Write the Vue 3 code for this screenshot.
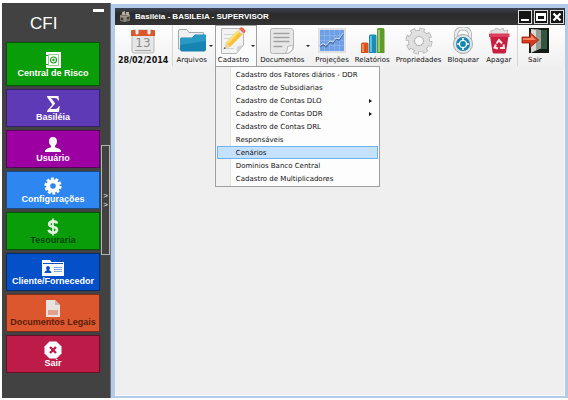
<template>
  <div class="desktop">
    <aside class="sidebar">
      <button class="minimize" type="button" aria-label="Minimizar"></button>
      <h1 class="brand">CFI</h1>
      <div class="sidebar-body">
        <nav class="tiles">
          <button
            v-for="tile in tiles"
            :key="tile.id"
            type="button"
            class="tile"
            :class="`tile-${tile.id}`"
          >
            <svg v-if="tile.id === 'risco'" class="tile-icon" viewBox="0 0 18 18">
              <path fill="#fff" d="M2 1h15v16H2z" />
              <path fill="none" stroke="#8fce8f" d="M4.500 3.500h10v11h-10z" />
              <circle cx="9.500" cy="9" r="3" fill="#fff" stroke="#1c9a1c" stroke-width="1.200" />
              <circle cx="9.500" cy="9" r="1.200" fill="#1c9a1c" />
              <path fill="#1c9a1c" d="M2 4h2v1H2zM2 13h2v1H2z" />
            </svg>
            <svg v-else-if="tile.id === 'basileia'" class="tile-icon" viewBox="0 0 18 18">
              <path fill="#fff" d="M3 1h11.500l.5 4.500h-1C13.400 3.700 12.500 3 10.500 3H7l4.200 5.500L6.300 14h4.900c2 0 2.900-.8 3.600-2.700h1L14.800 17H3v-1l5.400-6.400L3 2z" />
            </svg>
            <svg v-else-if="tile.id === 'usuario'" class="tile-icon" viewBox="0 0 18 18">
              <path fill="#fff" d="M9 1c2.600 0 4 1.800 4 4.200 0 2-.9 3.700-2 4.500v1.500c2.400.8 6 1.800 6 3.800v1H1v-1c0-2 3.600-3 6-3.800V9.700c-1.100-.8-2-2.500-2-4.500C5 2.800 6.400 1 9 1z" />
            </svg>
            <svg v-else-if="tile.id === 'config'" class="tile-icon" viewBox="0 0 18 18">
              <circle cx="9" cy="9" r="7.400" fill="none" stroke="#fff" stroke-width="2.400" stroke-dasharray="2.900 1.750" />
              <circle cx="9" cy="9" r="4.800" fill="none" stroke="#fff" stroke-width="4" />
            </svg>
            <svg v-else-if="tile.id === 'tesouraria'" class="tile-icon" viewBox="0 0 18 18">
              <path fill="none" stroke="#e2f2df" stroke-width="2.600" d="M13 5.500C12.600 4 11 3.400 9 3.400S5.200 4.400 5.200 6.200C5.200 10 13 7.600 13 11.800c0 1.900-1.800 2.900-4 2.900s-4-1-4.300-2.900" />
              <path fill="none" stroke="#e2f2df" stroke-width="1.800" d="M9 .5v17" />
            </svg>
            <svg v-else-if="tile.id === 'cliente'" class="tile-icon wide" viewBox="0 0 22 18">
              <path fill="#fff" d="M0 1h8l1.500 2H22v14H0z" />
              <path fill="#0a50c8" d="M1 4h20v1H1zM6 7c1.200 0 1.900.8 1.900 2S7.300 11 6.900 11.300c1 .4 2.600.8 2.600 2.700h-7c0-1.900 1.600-2.300 2.600-2.700C4.700 11 4.100 10.200 4.100 9S4.800 7 6 7z" />
              <path stroke="#7fa6e4" d="M12 8.500h8M12 10.500h8M12 12.500h8" />
            </svg>
            <svg v-else-if="tile.id === 'documentos'" class="tile-icon" viewBox="0 0 18 18">
              <path fill="#e9e3e0" d="M2 0h9l5 5v12H2z" />
              <path fill="#c9b6ae" d="M11 0l5 5h-5z" />
              <path fill="#e0a28e" d="M4 10h10v5H4z" />
            </svg>
            <svg v-else class="tile-icon" viewBox="0 0 18 18">
              <path fill="#fff" d="M5.500.5h7l5 5v7l-5 5h-7l-5-5v-7z" />
              <path stroke="#bd1c48" stroke-width="2.400" d="M6 6l6 6M12 6l-6 6" />
            </svg>
            <span>{{ tile.label }}</span>
          </button>
        </nav>
        <button class="handle" type="button" aria-label="Expandir">
          <span>&gt;</span>
          <span>&gt;</span>
        </button>
      </div>
    </aside>

    <main class="window">
      <header class="titlebar">
        <svg class="app-icon" viewBox="0 0 12 12">
          <path fill="#77726a" d="M1 4l7-2 3 2v6l-6 1-4-1z" />
          <path fill="#b5ada0" d="M3 1l3-1v4H3zM7 1h3v3H7z" />
          <path stroke="#a8a296" fill="none" d="M1 5l5 1 5-2M6 6v5" />
          <path fill="#3d3b38" d="M2 7h2v2H2zM8 6h2v2H8z" />
        </svg>
        <h2 class="title">Basiléia - BASILEIA - SUPERVISOR</h2>
        <div class="controls">
          <button type="button" aria-label="Minimizar janela">
            <svg viewBox="0 0 12 12"><path fill="#fff" d="M2 8h8v2H2z" /></svg>
          </button>
          <button type="button" aria-label="Maximizar janela">
            <svg viewBox="0 0 12 12"><path fill="#fff" fill-rule="evenodd" d="M1 2h10v8H1zM3 5v3h6V5z" /></svg>
          </button>
          <button type="button" aria-label="Fechar janela">
            <svg viewBox="0 0 12 12"><path stroke="#fff" stroke-width="2.400" d="M2.500 2.500l7 7M9.500 2.500l-7 7" /></svg>
          </button>
        </div>
      </header>

      <div class="toolbar">
        <div
          v-for="item in tools"
          :key="item.id"
          class="tool-wrap"
          :class="{ separated: item.separated }"
        >
          <button
            type="button"
            class="tool"
            :class="{ open: openMenu === item.id, date: item.id === 'data', dropdown: item.dropdown }"
            @click="toggle(item)"
          >
            <span class="tool-face">
              <svg v-if="item.id === 'data'" class="tool-icon" viewBox="0 0 28 28">
                <rect x="3" y="3" width="22" height="23" rx="2" fill="#e6e6e6" stroke="#b9b9b9" />
                <path fill="#d9572b" d="M3 3h22a1 1 0 0 1 1 1v5H2V4a1 1 0 0 1 1-1z" />
                <path stroke="#f3f3f3" stroke-width="3" stroke-linecap="round" d="M8 2v4M20 2v4" />
                <path stroke="#a5a5a5" d="M6 23.500h16" />
                <text x="14" y="20" text-anchor="middle" class="day">13</text>
              </svg>
              <svg v-else-if="item.id === 'arquivos'" class="tool-icon" viewBox="0 0 28 28">
                <path fill="#eef0f1" stroke="#a4a9ab" d="M.5 22V4q0-1.500 1.500-1.500h7l2 3h14.500V22z" />
                <path fill="#1784b2" d="M2 12q0-1.500 1.500-1.500H14l3-3h10q1 0 1 1V22.500q0 2-2 2H4q-2 0-2-2z" />
                <path fill="#37a6cf" d="M2 12.500q0-1.500 1.500-1.500h11l3-3H28V14L2 18z" opacity=".6" />
              </svg>
              <svg v-else-if="item.id === 'cadastro'" class="tool-icon" viewBox="0 0 28 28">
                <path fill="#f2f3f3" stroke="#b4b6b6" d="M2.500 1.500h22V18l-7 8.500h-15z" />
                <path fill="#cfd3d4" d="M24.500 18l-7 8.500.5-7z" />
                <path stroke="#d0d3d4" d="M5 7.500h10M5 11.500h7M5 21.500h10" />
                <path fill="#f6c338" d="M19 3l5 4L11 20l-5 1 1-5.500z" />
                <path fill="#fbe07c" d="M19 3l2 1.500L9 17l-2-1.500z" />
                <path fill="#dfe2e2" d="M18.500 3.500L20 2l5 4.500L23.500 8z" />
                <path fill="#ee6a4d" d="M20 2l1.500-1.500q1-.5 2 0L26 3q1 1 0 2.200L25 6.500z" />
                <path fill="#efd5ac" d="M7 15.500l4 4.500-6 1.800z" />
                <path fill="#555" d="M5.500 20l1.500 1.300-2.500 1z" />
              </svg>
              <svg v-else-if="item.id === 'documentos'" class="tool-icon" viewBox="0 0 28 28">
                <path fill="#e7e7e7" stroke="#b5b5b5" d="M4.500 1.500h18q3 0 3 3V20q-1 6-8 6.500h-13q-2 0-2-2v-21q0-2 2-2z" />
                <path fill="#fafafa" stroke="#b5b5b5" d="M25.500 19q-2-1-6 .5.500 4-2.500 7 7 0 8.500-7.500z" />
                <path stroke="#a2a2a2" stroke-width="1.300" stroke-linecap="round" d="M6 6.500h15M6 10.500h15M6 14.500h15M6 19.500h8" />
              </svg>
              <svg v-else-if="item.id === 'projecoes'" class="tool-icon" viewBox="0 0 28 28">
                <path fill="#dfe1e4" d="M0 1h28v25H0z" />
                <path fill="#6fa0e6" d="M2 3h24v21H2z" />
                <path stroke="#93baf0" stroke-width=".6" d="M6.500 3v21M11.500 3v21M16.500 3v21M21.500 3v21M2 8.500h24M2 13.500h24M2 18.500h24" />
                <path fill="none" stroke="#466ba8" stroke-width="1.800" d="M2 19.500l3-2 3 2 4-4.500 3 1 3-4 3 1 4-6" />
                <path fill="none" stroke="#e7effa" stroke-width=".9" d="M2 18.500l3-2 3 2 4-4.500 3 1 3-4 3 1 4-6" />
              </svg>
              <svg v-else-if="item.id === 'relatorios'" class="tool-icon" viewBox="0 0 28 28">
                <path fill="#d9531e" d="M3 17q0-1.500 1.500-1.500H9q1.500 0 1.500 1.500v9H3z" />
                <path fill="#f08a50" d="M4 17h2v8H4z" />
                <path fill="#1c8dba" d="M11 9q0-1.500 1.500-1.500H17q1.500 0 1.500 1.500v17H11z" />
                <path fill="#5cc0e0" d="M12 9h2v16h-2z" />
                <path fill="#5f9a2d" d="M19 3q0-2 1.500-2H25q1.500 0 1.500 2v23H19z" />
                <path fill="#9ccb63" d="M20 3h2v22h-2z" />
              </svg>
              <svg v-else-if="item.id === 'propriedades'" class="tool-icon" viewBox="0 0 28 28">
                <circle cx="14" cy="14" r="11" fill="none" stroke="#b4b4b4" stroke-width="5" stroke-dasharray="5 3.640" />
                <circle cx="14" cy="14" r="8" fill="none" stroke="#b4b4b4" stroke-width="6" />
                <circle cx="14" cy="14" r="10.500" fill="none" stroke="#e0e0e0" stroke-width="4.500" stroke-dasharray="3.400 4.847" stroke-dashoffset="-.7" />
                <circle cx="14" cy="14" r="7.800" fill="none" stroke="#e0e0e0" stroke-width="5" />
                <circle cx="14" cy="14" r="4.500" fill="#f6f6f6" stroke="#b4b4b4" />
              </svg>
              <svg v-else-if="item.id === 'bloquear'" class="tool-icon" viewBox="0 0 28 28">
                <path fill="none" stroke="#a9adaf" stroke-width="4" d="M7 14V8q0-6.500 7-6.500T21 8v6" />
                <path fill="none" stroke="#eceeee" stroke-width="2.400" d="M7 14V8q0-6.500 7-6.500T21 8v6" />
                <circle cx="14" cy="17" r="9.500" fill="#e3e6e7" stroke="#a5aaac" />
                <circle cx="14" cy="17" r="7" fill="#1786ae" />
                <circle cx="14" cy="17" r="3.500" fill="none" stroke="#fff" stroke-width="1.200" />
                <path fill="#fff" d="M13.200 11h1.600v3h-1.600zM13.200 20h1.600v3h-1.600zM8 16.200h3v1.600H8zM17 16.200h3v1.600h-3z" />
              </svg>
              <svg v-else-if="item.id === 'apagar'" class="tool-icon" viewBox="0 0 28 28">
                <path fill="#e1e1e1" stroke="#aaa" stroke-width=".7" d="M7 8L5.500 4l4-1 1.500-2 4 2 3-2 1 3 4-1-1.500 5z" />
                <path fill="#c71f41" d="M5 9h18.500L21 25q-.2 1.500-2 1.500H9.500q-1.800 0-2-1.500z" />
                <path fill="#dc3f5b" d="M4 6.500h20.500V10H4z" />
                <path fill="none" stroke="#fbe9ec" stroke-width="2" d="M11.500 16.500L14 13l3 3.500M18.500 17.500L19 21h-4M13 21.500l-3.500-1 1.500-3" />
              </svg>
              <svg v-else class="tool-icon" viewBox="0 0 28 28">
                <path fill="#171b18" d="M8 1h20v25H8z" />
                <path fill="#31553d" d="M19 3h7v19h-7z" />
                <path fill="#d8d9d4" d="M10 2l10 1v18L10 26z" />
                <path fill="#9a9d97" d="M15 2.500l5 .5v18l-5 2.500z" />
                <path fill="#d6391d" stroke="#8e1c0c" stroke-width=".8" d="M1 10h8V5.500L17.500 13 9 20.500V16H1z" />
                <path fill="#f58563" d="M2 11h8V8l5 5H2z" />
              </svg>
              <span class="tool-label">{{ item.label }}</span>
            </span>
            <span v-if="item.dropdown" class="caret"></span>
          </button>

          <ul v-if="item.id === 'cadastro' && openMenu === 'cadastro'" class="menu">
            <li v-for="entry in menuItems" :key="entry.label">
              <button
                type="button"
                class="menu-item"
                :class="{ active: entry.label === activeEntry }"
                @mouseenter="activeEntry = entry.label"
              >
                <span>{{ entry.label }}</span>
                <span v-if="entry.submenu" class="submenu-arrow"></span>
              </button>
            </li>
          </ul>
        </div>
      </div>

      <section class="workspace"></section>
    </main>
  </div>
</template>

<script setup>
import { ref } from 'vue';

const tiles = [
  { id: 'risco', label: 'Central de Risco' },
  { id: 'basileia', label: 'Basiléia' },
  { id: 'usuario', label: 'Usuário' },
  { id: 'config', label: 'Configurações' },
  { id: 'tesouraria', label: 'Tesouraria' },
  { id: 'cliente', label: 'Cliente/Fornecedor' },
  { id: 'documentos', label: 'Documentos Legais' },
  { id: 'sair', label: 'Sair' }
];

const tools = [
  { id: 'data', label: '28/02/2014' },
  { id: 'arquivos', label: 'Arquivos', dropdown: true, separated: true },
  { id: 'cadastro', label: 'Cadastro', dropdown: true },
  { id: 'documentos', label: 'Documentos', dropdown: true },
  { id: 'projecoes', label: 'Projeções' },
  { id: 'relatorios', label: 'Relatórios' },
  { id: 'propriedades', label: 'Propriedades' },
  { id: 'bloquear', label: 'Bloquear' },
  { id: 'apagar', label: 'Apagar' },
  { id: 'sair', label: 'Sair', separated: true }
];

const menuItems = [
  { label: 'Cadastro dos Fatores diários - DDR' },
  { label: 'Cadastro de Subsidiarias' },
  { label: 'Cadastro de Contas DLO', submenu: true },
  { label: 'Cadastro de Contas DDR', submenu: true },
  { label: 'Cadastro de Contas DRL' },
  { label: 'Responsáveis' },
  { label: 'Cenários' },
  { label: 'Domínios Banco Central' },
  { label: 'Cadastro de Multiplicadores' }
];

const openMenu = ref('cadastro');
const activeEntry = ref('Cenários');

function toggle(item) {
  if (!item.dropdown) return;
  openMenu.value = openMenu.value === item.id ? null : item.id;
}
</script>

<style>
body {
  margin: 0;
  background: #fff;
}
</style>

<style scoped>
.desktop {
  display: flex;
  box-sizing: border-box;
  min-height: 100vh;
  padding: 3px 0 2px 2px;
  font-family: "DejaVu Sans", sans-serif;
  font-size: 7px;
  color: #111;
}

button {
  margin: 0;
  padding: 0;
  border: 0;
  background: none;
  font: inherit;
  color: inherit;
}

/* Barra lateral */
.sidebar {
  display: flex;
  flex-direction: column;
  box-sizing: border-box;
  width: 109px;
  flex-shrink: 0;
  padding-left: 4px;
  background: #424242;
  border-right: 1px solid #6d7480;
  font-family: "Liberation Sans", Arial, sans-serif;
}

.minimize {
  align-self: flex-end;
  width: 11px;
  height: 3px;
  margin: 6px 6px 0 0;
  background: #fff;
}

.brand {
  margin: 2px 0 8px 24px;
  font-size: 17px;
  line-height: 20px;
  font-weight: 400;
  color: #fff;
}

.sidebar-body {
  display: flex;
  gap: 1px;
}

.tiles {
  display: flex;
  flex: 1;
  flex-direction: column;
  gap: 3px;
}

.tile {
  display: flex;
  flex-direction: column;
  align-items: center;
  justify-content: center;
  box-sizing: border-box;
  height: 38px;
  border: 1px solid rgba(0, 0, 0, 0.45);
  font-size: 9px;
  line-height: 9px;
  font-weight: 700;
  white-space: nowrap;
  color: #fff;
}

.tile-icon {
  width: 18px;
  height: 18px;
}

.tile-icon.wide {
  width: 22px;
}

.tile-risco {
  height: 44px;
  background: #099d09;
}

.tile-basileia {
  background: #5f3ab6;
}

.tile-usuario {
  background: #9c00a3;
}

.tile-config {
  background: #2e87f0;
}

.tile-tesouraria {
  background: #099d09;
  color: #07450a;
}

.tile-cliente {
  background: #0350c8;
}

.tile-documentos {
  background: #dc572e;
  color: #5c1d0b;
}

.tile-sair {
  background: #bd1c48;
}

.handle {
  display: flex;
  flex-direction: column;
  align-items: center;
  justify-content: center;
  box-sizing: border-box;
  width: 9px;
  height: 110px;
  margin-top: 103px;
  border: 1px solid #b4b4b4;
  font-size: 8px;
  line-height: 9px;
  color: #fff;
}

/* Janela principal */
.window {
  display: flex;
  flex: 1;
  flex-direction: column;
  min-width: 0;
  margin-top: 1px;
  border: solid #b2cbe8;
  border-width: 4px 3px 2px 4px;
  background: #efefef;
}

.titlebar {
  display: flex;
  align-items: center;
  height: 17px;
  padding: 0 1px 0 4px;
  background: linear-gradient(#3c4350, #2b2b2b 35%, #343434);
  color: #fff;
}

.app-icon {
  width: 12px;
  height: 12px;
}

.title {
  flex: 1;
  margin: 0 0 0 4px;
  font-family: "Liberation Sans", Arial, sans-serif;
  font-size: 8px;
  font-weight: 700;
}

.controls {
  display: flex;
  gap: 2px;
}

.controls button {
  display: flex;
  box-sizing: border-box;
  width: 14px;
  height: 14px;
  border: 1px solid #dcdcdc;
  background: #151515;
}

.controls svg {
  width: 12px;
  height: 12px;
}

.toolbar {
  display: flex;
  height: 41px;
  background: linear-gradient(#fefefe, #f0f0f0);
}

.tool-wrap {
  position: relative;
  display: flex;
}

.separated {
  margin-left: 1px;
  border-left: 1px solid #d6d6d6;
}

.tool {
  display: flex;
  align-items: center;
  box-sizing: border-box;
  border: 1px solid transparent;
  border-bottom: 0;
}

.tool.open {
  border-color: #a0a0a0;
  background: #fbfbfb;
}

.tool-face {
  display: flex;
  flex-direction: column;
  align-items: center;
  padding: 1px 2px 0;
}

.tool.dropdown .tool-face {
  padding-right: 0;
}

.tool-icon {
  width: 28px;
  height: 28px;
}

.tool-label {
  line-height: 11px;
  white-space: nowrap;
}

.date .tool-label {
  font-size: 8px;
  font-weight: 700;
}

.day {
  font-size: 12px;
  fill: #8c8c8c;
}

.caret {
  margin: 0 1px 0 2px;
  border: solid transparent;
  border-width: 2px 2px 0;
  border-top-color: #222;
}

/* Menu suspenso */
.menu {
  position: absolute;
  top: 100%;
  left: 0;
  z-index: 1;
  box-sizing: border-box;
  width: 165px;
  margin: 0;
  padding: 1px;
  border: 1px solid #a0a0a0;
  background: linear-gradient(90deg, #f1f1f1 14px, #e2e2e2 14px, #e2e2e2 15px, #fdfdfd 15px);
  list-style: none;
}

.menu-item {
  display: flex;
  align-items: center;
  justify-content: space-between;
  box-sizing: border-box;
  width: 100%;
  height: 13px;
  padding: 0 5px 0 18px;
  border: 1px solid transparent;
  white-space: nowrap;
}

.menu-item.active {
  border-color: #6db3f2;
  background: #c4e1ff;
}

.submenu-arrow {
  border: solid transparent;
  border-width: 2px 0 2px 3px;
  border-left-color: #111;
}

.workspace {
  flex: 1;
  border: solid #f8f8f8;
  border-width: 0 1px 1px 0;
}
</style>
